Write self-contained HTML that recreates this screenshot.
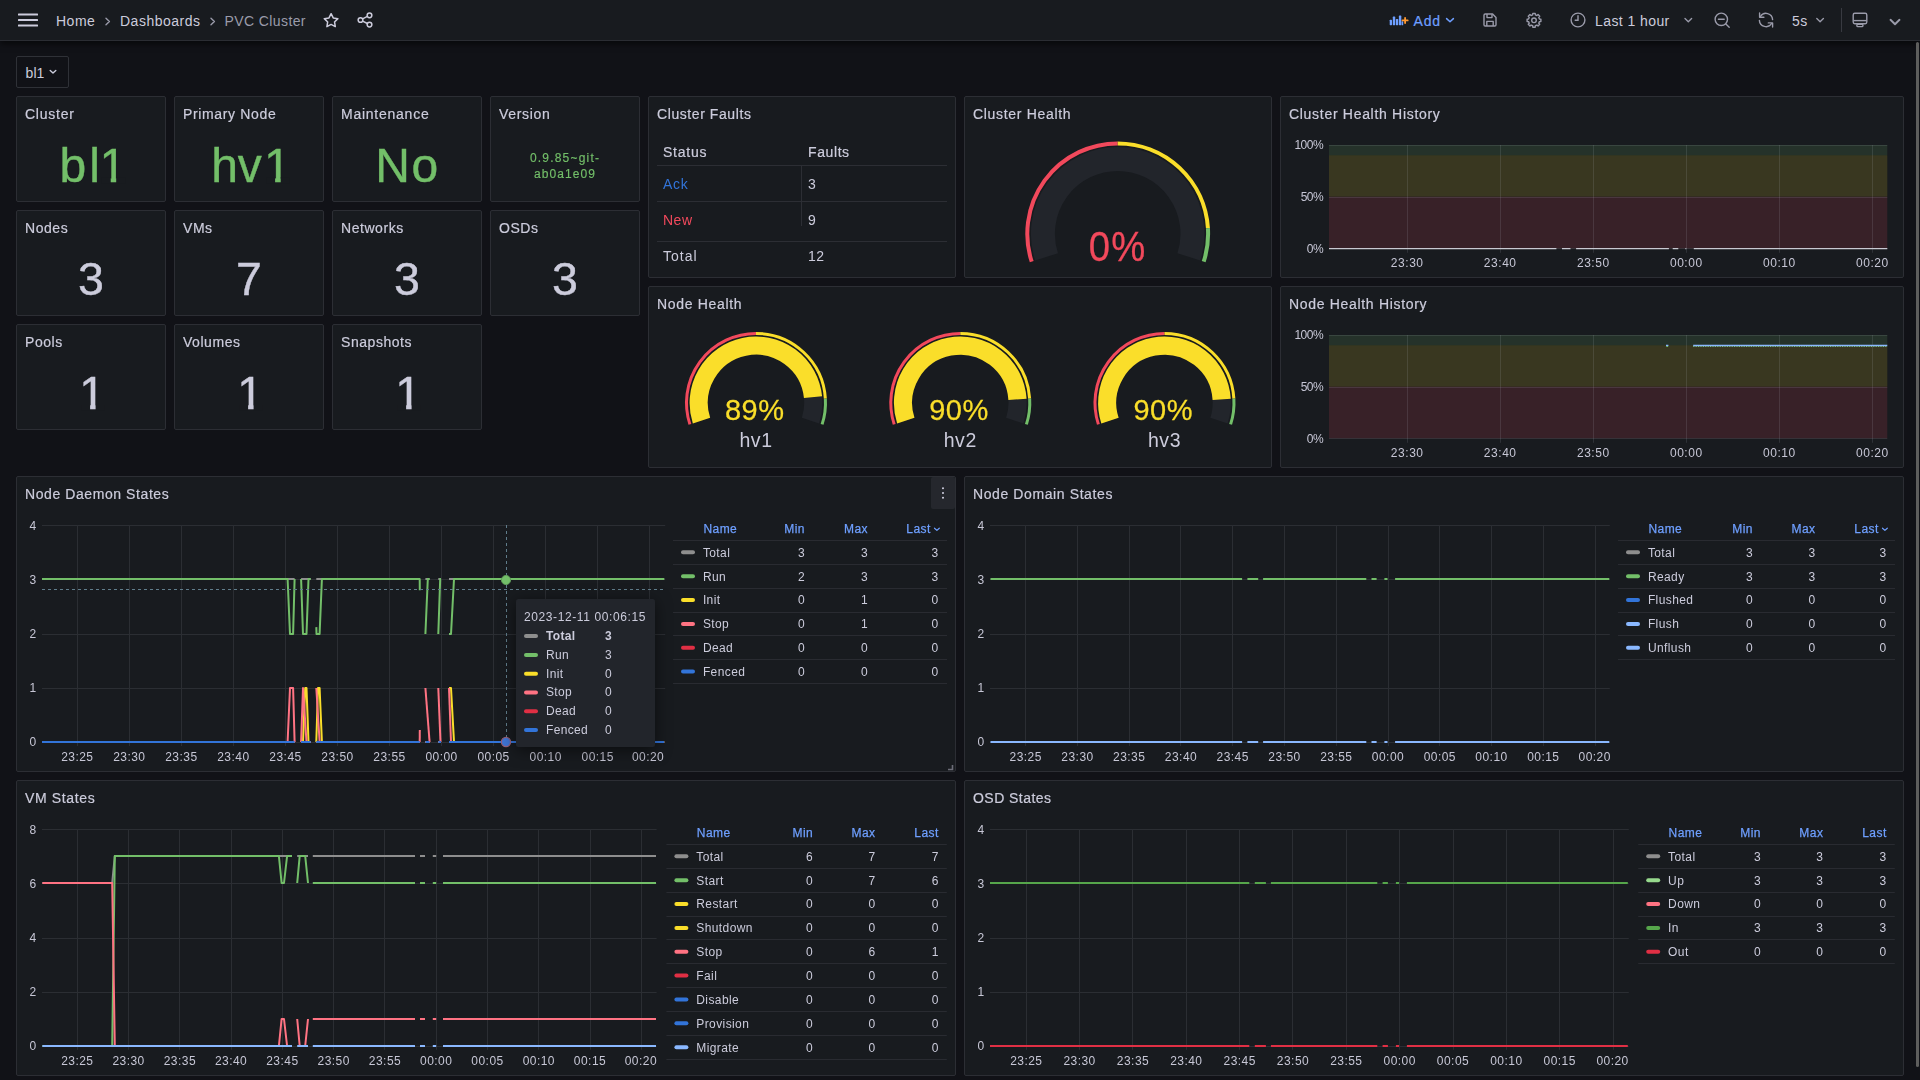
<!DOCTYPE html><html lang="en"><head><meta charset="utf-8"><title>PVC Cluster - Dashboards - Grafana</title><style>

*{box-sizing:border-box;margin:0;padding:0}
html,body{width:1920px;height:1080px;overflow:hidden;background:#111217;color:#ccccdc;
 font-family:"Liberation Sans",sans-serif;font-size:14px;}
body{position:relative}
.abs{position:absolute}
.nav{position:absolute;left:0;top:0;width:1920px;height:41px;background:#181b1f;border-bottom:1px solid #2b2d33;
 box-shadow:0 3px 6px rgba(0,0,0,0.55)}
.nav .t{position:absolute;top:12.7px;font-size:14px;line-height:17px;white-space:nowrap;letter-spacing:.35px}
.panel{position:absolute;background:#181b1f;border:1px solid #2c2e34;border-radius:2px;overflow:hidden}
.ptitle{position:absolute;left:8px;top:8px;font-size:14px;line-height:19px;letter-spacing:.5px;white-space:nowrap;color:#ccccdc;-webkit-text-stroke:.25px #ccccdc}
.big{position:absolute;left:0;right:0;text-align:center;white-space:nowrap}
svg{position:absolute;left:0;top:0;overflow:visible}
svg text{font-family:"Liberation Sans",sans-serif}
.lt{position:absolute;font-size:12px;line-height:19px;white-space:nowrap;letter-spacing:.35px}
.lh{color:#6e9fff;-webkit-text-stroke:.2px #6e9fff}
.lrow{position:absolute;height:1px;background:#2c2e34}
.lic{position:absolute;width:14px;height:4px;border-radius:2px}

</style></head><body>
<div class="nav">
<svg width="1920" height="41" viewBox="0 0 1920 41">
<g fill="#ccccdc"><rect x="18" y="13.6" width="20" height="2" rx=".5"/><rect x="18" y="19.1" width="20" height="2" rx=".5"/><rect x="18" y="24.6" width="20" height="2" rx=".5"/></g>
<g fill="none" stroke="#9a9baa" stroke-width="1.4" stroke-linecap="round" stroke-linejoin="round"><path d="M106 18.3 L109.4 21.5 L106 24.7"/><path d="M211 18.3 L214.4 21.5 L211 24.7"/></g>
<polygon points="331.10,13.70 333.22,17.94 337.90,18.64 334.52,21.96 335.30,26.63 331.10,24.45 326.90,26.63 327.68,21.96 324.30,18.64 328.98,17.94" fill="none" stroke="#ccccdc" stroke-width="1.5" stroke-linejoin="round"/>
<g fill="none" stroke="#ccccdc" stroke-width="1.5"><circle cx="369.5" cy="15.3" r="2.35"/><circle cx="369.5" cy="24.6" r="2.35"/><circle cx="360.5" cy="20" r="2.35"/><path d="M362.6 18.9 L367.4 16.4 M362.6 21.1 L367.4 23.5"/></g>
<g fill="#6e9fff"><rect x="1389.7" y="19.7" width="2.3" height="5.5" rx=".6"/><rect x="1392.8" y="16.6" width="2.4" height="8.6" rx=".6"/><rect x="1395.9" y="19" width="2.3" height="6.2" rx=".6"/><rect x="1398.9" y="15.6" width="2.4" height="9.6" rx=".6"/><rect x="1401.6" y="21.3" width="1.6" height="3.9" rx=".5"/></g>
<path d="M1405.1 17.8 V23 M1402.5 20.4 H1407.7" stroke="#ff9830" stroke-width="1.8" fill="none" stroke-linecap="round"/>
<path d="M1446.6 18.6 L1450 21.8 L1453.4 18.6" fill="none" stroke="#6e9fff" stroke-width="1.5" stroke-linecap="round" stroke-linejoin="round"/>
<g fill="none" stroke="#9a9baa" stroke-width="1.4" stroke-linejoin="round"><path d="M1485.2 14 H1492.6 L1496 17.4 V24.8 Q1496 26 1494.8 26 H1485.2 Q1484 26 1484 24.8 V15.2 Q1484 14 1485.2 14 Z"/><path d="M1487 14 V17.6 H1492 V14.2"/><path d="M1486.8 26 V21.4 H1493.2 V26"/></g>
<polygon points="1532.80,13.40 1535.20,13.40 1535.31,14.85 1536.93,15.53 1538.03,14.57 1539.73,16.27 1538.77,17.37 1539.45,18.99 1540.90,19.10 1540.90,21.50 1539.45,21.61 1538.77,23.23 1539.73,24.33 1538.03,26.03 1536.93,25.07 1535.31,25.75 1535.20,27.20 1532.80,27.20 1532.69,25.75 1531.07,25.07 1529.97,26.03 1528.27,24.33 1529.23,23.23 1528.55,21.61 1527.10,21.50 1527.10,19.10 1528.55,18.99 1529.23,17.37 1528.27,16.27 1529.97,14.57 1531.07,15.53 1532.69,14.85" fill="none" stroke="#9a9baa" stroke-width="1.4" stroke-linejoin="round"/>
<circle cx="1534" cy="20.3" r="2.3" fill="none" stroke="#9a9baa" stroke-width="1.4"/>
<g fill="none" stroke="#9a9baa" stroke-width="1.4" stroke-linecap="round"><circle cx="1578" cy="20" r="6.9"/><path d="M1578 15.8 V20.2 H1575.2"/></g>
<path d="M1685 18.6 L1688.3 21.7 L1691.6 18.6" fill="none" stroke="#9a9baa" stroke-width="1.4" stroke-linecap="round" stroke-linejoin="round"/>
<g fill="none" stroke="#9a9baa" stroke-width="1.4" stroke-linecap="round"><circle cx="1721.3" cy="19.3" r="6.2"/><path d="M1725.9 23.9 L1729.2 27.2 M1718.4 19.3 H1724.2"/></g>
<g fill="none" stroke="#9a9baa" stroke-width="1.4" stroke-linecap="round" stroke-linejoin="round"><path d="M1760.4 16.5 A6.6 6.6 0 0 1 1772.6 19.6"/><path d="M1759.4 20.4 A6.6 6.6 0 0 0 1771.6 23.5"/><path d="M1759.6 12.9 V17.2 H1763.9"/><path d="M1772.6 27.1 V22.9 H1768.3"/></g>
<path d="M1816.8 18.6 L1820.1 21.7 L1823.4 18.6" fill="none" stroke="#9a9baa" stroke-width="1.4" stroke-linecap="round" stroke-linejoin="round"/>
<rect x="1841" y="8" width="1" height="24" fill="#383a41"/>
<g fill="none" stroke="#9a9baa" stroke-width="1.4" stroke-linejoin="round"><rect x="1853.2" y="13.3" width="13.6" height="10.4" rx="1.6"/><path d="M1853.4 20.6 H1866.6"/><rect x="1856.9" y="24.2" width="6" height="2.4" rx=".9"/></g>
<path d="M1890.5 19.8 L1895 24.2 L1899.5 19.8" fill="none" stroke="#9a9baa" stroke-width="1.9" stroke-linecap="round" stroke-linejoin="round"/>
</svg>
<div class="t" style="left:56px;letter-spacing:.5px">Home</div>
<div class="t" style="left:120px;letter-spacing:.5px">Dashboards</div>
<div class="t" style="left:224.5px;color:#9a9baa;letter-spacing:.4px">PVC Cluster</div>
<div class="t" style="left:1413.5px;color:#6e9fff;letter-spacing:.85px;-webkit-text-stroke:.2px #6e9fff">Add</div>
<div class="t" style="left:1595px;letter-spacing:.42px">Last 1 hour</div>
<div class="t" style="left:1792px">5s</div>
</div>
<div class="abs" style="left:16px;top:56px;width:53px;height:32px;border:1px solid #2f3137;border-radius:2px;background:#111217"></div>
<div class="abs" style="left:25.5px;top:64px;font-size:14px;line-height:19px;letter-spacing:.1px">bl1</div>
<svg width="1920" height="100" viewBox="0 0 1920 100" style="pointer-events:none"><path d="M50.2 70.4 L53 73 L55.8 70.4" fill="none" stroke="#ccccdc" stroke-width="1.4" stroke-linecap="round" stroke-linejoin="round"/></svg>
<div class="abs" style="left:1916px;top:42px;width:3px;height:1025px;background:#5e5e5d;border-radius:1.5px"></div>
<div class="panel" style="left:16px;top:96px;width:150px;height:106px"></div>
<div class="panel" style="left:174px;top:96px;width:150px;height:106px"></div>
<div class="panel" style="left:332px;top:96px;width:150px;height:106px"></div>
<div class="panel" style="left:490px;top:96px;width:150px;height:106px"></div>
<div class="panel" style="left:16px;top:210px;width:150px;height:106px"></div>
<div class="panel" style="left:174px;top:210px;width:150px;height:106px"></div>
<div class="panel" style="left:332px;top:210px;width:150px;height:106px"></div>
<div class="panel" style="left:490px;top:210px;width:150px;height:106px"></div>
<div class="panel" style="left:16px;top:324px;width:150px;height:106px"></div>
<div class="panel" style="left:174px;top:324px;width:150px;height:106px"></div>
<div class="panel" style="left:332px;top:324px;width:150px;height:106px"></div>
<div class="panel" style="left:648px;top:96px;width:308px;height:182px"></div>
<div class="panel" style="left:964px;top:96px;width:308px;height:182px"></div>
<div class="panel" style="left:1280px;top:96px;width:624px;height:182px"></div>
<div class="panel" style="left:648px;top:286px;width:624px;height:182px"></div>
<div class="panel" style="left:1280px;top:286px;width:624px;height:182px"></div>
<div class="panel" style="left:16px;top:476px;width:940px;height:296px"></div>
<div class="panel" style="left:964px;top:476px;width:940px;height:296px"></div>
<div class="panel" style="left:16px;top:780px;width:940px;height:296px"></div>
<div class="panel" style="left:964px;top:780px;width:940px;height:296px"></div>
<svg width="1920" height="1080" viewBox="0 0 1920 1080" style="will-change:transform">
<text x="25" y="119" font-size="14" fill="#ccccdc" letter-spacing="0.75" stroke="#ccccdc" stroke-width="0.2">Cluster</text>
<text x="183" y="119" font-size="14" fill="#ccccdc" letter-spacing="0.65" stroke="#ccccdc" stroke-width="0.2">Primary Node</text>
<text x="341" y="119" font-size="14" fill="#ccccdc" letter-spacing="0.75" stroke="#ccccdc" stroke-width="0.2">Maintenance</text>
<text x="499" y="119" font-size="14" fill="#ccccdc" letter-spacing="0.7" stroke="#ccccdc" stroke-width="0.2">Version</text>
<text x="25" y="233" font-size="14" fill="#ccccdc" letter-spacing="0.55" stroke="#ccccdc" stroke-width="0.2">Nodes</text>
<text x="183" y="233" font-size="14" fill="#ccccdc" letter-spacing="0.55" stroke="#ccccdc" stroke-width="0.2">VMs</text>
<text x="341" y="233" font-size="14" fill="#ccccdc" letter-spacing="0.55" stroke="#ccccdc" stroke-width="0.2">Networks</text>
<text x="499" y="233" font-size="14" fill="#ccccdc" letter-spacing="0.55" stroke="#ccccdc" stroke-width="0.2">OSDs</text>
<text x="25" y="347" font-size="14" fill="#ccccdc" letter-spacing="0.55" stroke="#ccccdc" stroke-width="0.2">Pools</text>
<text x="183" y="347" font-size="14" fill="#ccccdc" letter-spacing="0.55" stroke="#ccccdc" stroke-width="0.2">Volumes</text>
<text x="341" y="347" font-size="14" fill="#ccccdc" letter-spacing="0.55" stroke="#ccccdc" stroke-width="0.2">Snapshots</text>
<text x="657" y="119" font-size="14" fill="#ccccdc" letter-spacing="0.58" stroke="#ccccdc" stroke-width="0.2">Cluster Faults</text>
<text x="973" y="119" font-size="14" fill="#ccccdc" letter-spacing="0.68" stroke="#ccccdc" stroke-width="0.2">Cluster Health</text>
<text x="1289" y="119" font-size="14" fill="#ccccdc" letter-spacing="0.7" stroke="#ccccdc" stroke-width="0.2">Cluster Health History</text>
<text x="657" y="309" font-size="14" fill="#ccccdc" letter-spacing="0.68" stroke="#ccccdc" stroke-width="0.2">Node Health</text>
<text x="1289" y="309" font-size="14" fill="#ccccdc" letter-spacing="0.68" stroke="#ccccdc" stroke-width="0.2">Node Health History</text>
<text x="25" y="499" font-size="14" fill="#ccccdc" letter-spacing="0.58" stroke="#ccccdc" stroke-width="0.2">Node Daemon States</text>
<text x="973" y="499" font-size="14" fill="#ccccdc" letter-spacing="0.6" stroke="#ccccdc" stroke-width="0.2">Node Domain States</text>
<text x="25" y="803" font-size="14" fill="#ccccdc" letter-spacing="0.65" stroke="#ccccdc" stroke-width="0.2">VM States</text>
<text x="973" y="803" font-size="14" fill="#ccccdc" letter-spacing="0.45" stroke="#ccccdc" stroke-width="0.2">OSD States</text>
<text y="181.7" font-size="48" fill="#73bf69" stroke="#73bf69" stroke-width="0.4"><tspan x="59.5">b</tspan><tspan x="89.3">l</tspan><tspan x="99.4">1</tspan></text>
<rect x="101.8" y="177.3" width="8.9" height="6.0" fill="#181b1f"/>
<rect x="116.2" y="177.3" width="9.2" height="6.0" fill="#181b1f"/>
<text y="181.7" font-size="48" fill="#73bf69" stroke="#73bf69" stroke-width="0.4"><tspan x="211.2">h</tspan><tspan x="237.8">v</tspan><tspan x="263.9">1</tspan></text>
<rect x="266.2" y="177.3" width="8.9" height="6.0" fill="#181b1f"/>
<rect x="280.7" y="177.3" width="9.2" height="6.0" fill="#181b1f"/>
<text x="407.5" y="181.7" font-size="48" fill="#73bf69" text-anchor="middle" letter-spacing="1.5" stroke="#73bf69" stroke-width="0.4">No</text>
<text x="565" y="162.3" font-size="12" fill="#73bf69" text-anchor="middle" letter-spacing="1.2" stroke="#73bf69" stroke-width="0.15">0.9.85~git-</text>
<text x="565" y="177.8" font-size="12" fill="#73bf69" text-anchor="middle" letter-spacing="1.1" stroke="#73bf69" stroke-width="0.15">ab0a1e09</text>
<text x="91" y="295.4" font-size="46.5" fill="#ccccdc" text-anchor="middle" stroke="#ccccdc" stroke-width="0.4">3</text>
<text x="249" y="295.4" font-size="46.5" fill="#ccccdc" text-anchor="middle" stroke="#ccccdc" stroke-width="0.4">7</text>
<text x="407" y="295.4" font-size="46.5" fill="#ccccdc" text-anchor="middle" stroke="#ccccdc" stroke-width="0.4">3</text>
<text x="565" y="295.4" font-size="46.5" fill="#ccccdc" text-anchor="middle" stroke="#ccccdc" stroke-width="0.4">3</text>
<text x="92.2" y="409.3" font-size="46.5" fill="#ccccdc" text-anchor="middle" stroke="#ccccdc" stroke-width="0.4">1</text>
<rect x="81.5" y="405.0" width="8.6" height="5.8" fill="#181b1f"/>
<rect x="95.6" y="405.0" width="8.9" height="5.8" fill="#181b1f"/>
<text x="250.2" y="409.3" font-size="46.5" fill="#ccccdc" text-anchor="middle" stroke="#ccccdc" stroke-width="0.4">1</text>
<rect x="239.5" y="405.0" width="8.6" height="5.8" fill="#181b1f"/>
<rect x="253.6" y="405.0" width="8.9" height="5.8" fill="#181b1f"/>
<text x="408.2" y="409.3" font-size="46.5" fill="#ccccdc" text-anchor="middle" stroke="#ccccdc" stroke-width="0.4">1</text>
<rect x="397.5" y="405.0" width="8.6" height="5.8" fill="#181b1f"/>
<rect x="411.6" y="405.0" width="8.9" height="5.8" fill="#181b1f"/>
<g fill="#2c2e34"><rect x="657" y="165" width="290" height="1"/><rect x="657" y="201" width="290" height="1"/><rect x="657" y="241" width="290" height="1"/><rect x="801" y="166" width="1" height="60"/></g>
<text x="663" y="156.7" font-size="14" fill="#ccccdc" letter-spacing="0.75" stroke="#ccccdc" stroke-width="0.2">Status</text>
<text x="808" y="156.7" font-size="14" fill="#ccccdc" letter-spacing="0.6" stroke="#ccccdc" stroke-width="0.2">Faults</text>
<text x="663" y="189" font-size="14" fill="#3274d9" letter-spacing="0.7">Ack</text>
<text x="808" y="189" font-size="14" fill="#ccccdc" letter-spacing="0.5">3</text>
<text x="663" y="225" font-size="14" fill="#f2495c" letter-spacing="0.5">New</text>
<text x="808" y="225" font-size="14" fill="#ccccdc" letter-spacing="0.5">9</text>
<text x="663" y="261" font-size="14" fill="#ccccdc" letter-spacing="1.0">Total</text>
<text x="808" y="261" font-size="14" fill="#ccccdc" letter-spacing="0.5">12</text>
<path d="M1031.72 261.74 A90.40 90.40 0 0 1 1117.70 143.40" fill="none" stroke="#f2495c" stroke-width="4.0"/>
<path d="M1117.70 143.40 A90.40 90.40 0 0 1 1207.92 228.12" fill="none" stroke="#fade2a" stroke-width="4.0"/>
<path d="M1207.92 228.12 A90.40 90.40 0 0 1 1203.68 261.74" fill="none" stroke="#73bf69" stroke-width="4.0"/>
<path d="M1046.56 256.91 A74.80 74.80 0 1 1 1188.84 256.91" fill="none" stroke="#22252b" stroke-width="24.0"/>
<text x="0" y="0" font-size="42.5" fill="#f2495c" text-anchor="middle" letter-spacing="1.5" stroke="#f2495c" stroke-width="0.3" transform="translate(1117.7,261.3) scale(0.9,1)">0%</text>
<path d="M689.90 424.38 A69.50 69.50 0 0 1 756.00 333.40" fill="none" stroke="#f2495c" stroke-width="3.0"/>
<path d="M756.00 333.40 A69.50 69.50 0 0 1 825.36 398.54" fill="none" stroke="#fade2a" stroke-width="3.0"/>
<path d="M825.36 398.54 A69.50 69.50 0 0 1 822.10 424.38" fill="none" stroke="#73bf69" stroke-width="3.0"/>
<path d="M701.50 420.61 A57.30 57.30 0 1 1 810.50 420.61" fill="none" stroke="#22252b" stroke-width="18.2"/>
<path d="M701.50 420.61 A57.30 57.30 0 1 1 813.01 397.15" fill="none" stroke="#fade2a" stroke-width="18.2"/>
<text x="0" y="0" font-size="29.5" fill="#fade2a" text-anchor="middle" letter-spacing="0.5" stroke="#fade2a" stroke-width="0.25" transform="translate(754.7,420.4) scale(0.985,1)">89%</text>
<text x="756" y="447.2" font-size="19.5" fill="#ccccdc" text-anchor="middle" letter-spacing="0.6">hv1</text>
<path d="M894.20 424.38 A69.50 69.50 0 0 1 960.30 333.40" fill="none" stroke="#f2495c" stroke-width="3.0"/>
<path d="M960.30 333.40 A69.50 69.50 0 0 1 1029.66 398.54" fill="none" stroke="#fade2a" stroke-width="3.0"/>
<path d="M1029.66 398.54 A69.50 69.50 0 0 1 1026.40 424.38" fill="none" stroke="#73bf69" stroke-width="3.0"/>
<path d="M905.80 420.61 A57.30 57.30 0 1 1 1014.80 420.61" fill="none" stroke="#22252b" stroke-width="18.2"/>
<path d="M905.80 420.61 A57.30 57.30 0 1 1 1017.49 399.30" fill="none" stroke="#fade2a" stroke-width="18.2"/>
<text x="0" y="0" font-size="29.5" fill="#fade2a" text-anchor="middle" letter-spacing="0.5" stroke="#fade2a" stroke-width="0.25" transform="translate(959.0,420.4) scale(0.985,1)">90%</text>
<text x="960.3" y="447.2" font-size="19.5" fill="#ccccdc" text-anchor="middle" letter-spacing="0.6">hv2</text>
<path d="M1098.40 424.38 A69.50 69.50 0 0 1 1164.50 333.40" fill="none" stroke="#f2495c" stroke-width="3.0"/>
<path d="M1164.50 333.40 A69.50 69.50 0 0 1 1233.86 398.54" fill="none" stroke="#fade2a" stroke-width="3.0"/>
<path d="M1233.86 398.54 A69.50 69.50 0 0 1 1230.60 424.38" fill="none" stroke="#73bf69" stroke-width="3.0"/>
<path d="M1110.00 420.61 A57.30 57.30 0 1 1 1219.00 420.61" fill="none" stroke="#22252b" stroke-width="18.2"/>
<path d="M1110.00 420.61 A57.30 57.30 0 1 1 1221.69 399.30" fill="none" stroke="#fade2a" stroke-width="18.2"/>
<text x="0" y="0" font-size="29.5" fill="#fade2a" text-anchor="middle" letter-spacing="0.5" stroke="#fade2a" stroke-width="0.25" transform="translate(1163.2,420.4) scale(0.985,1)">90%</text>
<text x="1164.5" y="447.2" font-size="19.5" fill="#ccccdc" text-anchor="middle" letter-spacing="0.6">hv3</text>
</svg>
<svg width="1920" height="1080" viewBox="0 0 1920 1080" style="will-change:transform">
<rect x="1329" y="196.7" width="558.3" height="51.7" fill="#f2495c" fill-opacity=".15"/>
<rect x="1329" y="155.3" width="558.3" height="41.3" fill="#fade2a" fill-opacity=".15"/>
<rect x="1329" y="145.0" width="558.3" height="10.3" fill="#73bf69" fill-opacity=".15"/>
<path d="M1407.5 145 V252.8 M1500.5 145 V252.8 M1593.5 145 V252.8 M1686.5 145 V252.8 M1779.5 145 V252.8 M1872.5 145 V252.8 M1329 248.5 H1887.3 M1329 197.5 H1887.3 M1329 145.5 H1887.3" stroke="rgba(204,204,220,.13)" stroke-width="1" fill="none"/>
<text x="1323.3" y="252.7" font-size="12" fill="#c7c7d6" text-anchor="end" letter-spacing="-0.45">0%</text>
<text x="1323.3" y="201.1" font-size="12" fill="#c7c7d6" text-anchor="end" letter-spacing="-0.45">50%</text>
<text x="1323.3" y="149.4" font-size="12" fill="#c7c7d6" text-anchor="end" letter-spacing="-0.45">100%</text>
<text x="1407.2" y="266.8" font-size="12" fill="#c7c7d6" text-anchor="middle" letter-spacing="0.55">23:30</text>
<text x="1500.2" y="266.8" font-size="12" fill="#c7c7d6" text-anchor="middle" letter-spacing="0.55">23:40</text>
<text x="1593.3" y="266.8" font-size="12" fill="#c7c7d6" text-anchor="middle" letter-spacing="0.55">23:50</text>
<text x="1686.3" y="266.8" font-size="12" fill="#c7c7d6" text-anchor="middle" letter-spacing="0.55">00:00</text>
<text x="1779.4" y="266.8" font-size="12" fill="#c7c7d6" text-anchor="middle" letter-spacing="0.55">00:10</text>
<text x="1872.4" y="266.8" font-size="12" fill="#c7c7d6" text-anchor="middle" letter-spacing="0.55">00:20</text>
<path d="M1329.0 248.5 H1556.4 M1562.0 248.5 H1570.5 M1576.1 248.5 H1668.9 M1672.7 248.5 H1678.3 M1685.4 248.5 H1686.3 M1693.8 248.5 H1887.3" stroke="#c9c9d2" stroke-width="1.25" fill="none"/>
<rect x="1329" y="386.6" width="558.3" height="51.7" fill="#f2495c" fill-opacity=".15"/>
<rect x="1329" y="345.3" width="558.3" height="41.3" fill="#fade2a" fill-opacity=".15"/>
<rect x="1329" y="335.0" width="558.3" height="10.3" fill="#73bf69" fill-opacity=".15"/>
<path d="M1407.5 335 V442.8 M1500.5 335 V442.8 M1593.5 335 V442.8 M1686.5 335 V442.8 M1779.5 335 V442.8 M1872.5 335 V442.8 M1329 438.5 H1887.3 M1329 387.5 H1887.3 M1329 335.5 H1887.3" stroke="rgba(204,204,220,.13)" stroke-width="1" fill="none"/>
<text x="1323.3" y="442.7" font-size="12" fill="#c7c7d6" text-anchor="end" letter-spacing="-0.45">0%</text>
<text x="1323.3" y="391.0" font-size="12" fill="#c7c7d6" text-anchor="end" letter-spacing="-0.45">50%</text>
<text x="1323.3" y="339.4" font-size="12" fill="#c7c7d6" text-anchor="end" letter-spacing="-0.45">100%</text>
<text x="1407.2" y="456.8" font-size="12" fill="#c7c7d6" text-anchor="middle" letter-spacing="0.55">23:30</text>
<text x="1500.2" y="456.8" font-size="12" fill="#c7c7d6" text-anchor="middle" letter-spacing="0.55">23:40</text>
<text x="1593.3" y="456.8" font-size="12" fill="#c7c7d6" text-anchor="middle" letter-spacing="0.55">23:50</text>
<text x="1686.3" y="456.8" font-size="12" fill="#c7c7d6" text-anchor="middle" letter-spacing="0.55">00:00</text>
<text x="1779.4" y="456.8" font-size="12" fill="#c7c7d6" text-anchor="middle" letter-spacing="0.55">00:10</text>
<text x="1872.4" y="456.8" font-size="12" fill="#c7c7d6" text-anchor="middle" letter-spacing="0.55">00:20</text>
<path d="M1693.2 346.4 H1887.3" stroke="#73bf69" stroke-width="1.4" stroke-dasharray="1.2 1.2" fill="none"/>
<path d="M1693.2 345.4 H1887.3 M1666 345.4 H1668.4" stroke="#8ab8ff" stroke-width="1.5" fill="none"/>
<path d="M1666.4 346.5 H1668" stroke="#73bf69" stroke-width="1.2" fill="none"/>
<path d="M42.0 742.5 H665.2 M42.0 688.5 H665.2 M42.0 634.5 H665.2 M42.0 579.5 H665.2 M42.0 525.5 H665.2 M77.5 525.3 V746.0 M129.5 525.3 V746.0 M181.5 525.3 V746.0 M233.5 525.3 V746.0 M285.5 525.3 V746.0 M337.5 525.3 V746.0 M389.5 525.3 V746.0 M441.5 525.3 V746.0 M493.5 525.3 V746.0 M545.5 525.3 V746.0 M597.5 525.3 V746.0 M649.5 525.3 V746.0" stroke="#2b2e33" stroke-width="1" fill="none"/>
<text x="36.2" y="746.4" font-size="12" fill="#c7c7d6" text-anchor="end">0</text>
<text x="36.2" y="692.2" font-size="12" fill="#c7c7d6" text-anchor="end">1</text>
<text x="36.2" y="638.0" font-size="12" fill="#c7c7d6" text-anchor="end">2</text>
<text x="36.2" y="583.9" font-size="12" fill="#c7c7d6" text-anchor="end">3</text>
<text x="36.2" y="529.7" font-size="12" fill="#c7c7d6" text-anchor="end">4</text>
<text x="77.3" y="760.9" font-size="12" fill="#c7c7d6" text-anchor="middle" letter-spacing="0.45">23:25</text>
<text x="129.3" y="760.9" font-size="12" fill="#c7c7d6" text-anchor="middle" letter-spacing="0.45">23:30</text>
<text x="181.4" y="760.9" font-size="12" fill="#c7c7d6" text-anchor="middle" letter-spacing="0.45">23:35</text>
<text x="233.4" y="760.9" font-size="12" fill="#c7c7d6" text-anchor="middle" letter-spacing="0.45">23:40</text>
<text x="285.5" y="760.9" font-size="12" fill="#c7c7d6" text-anchor="middle" letter-spacing="0.45">23:45</text>
<text x="337.5" y="760.9" font-size="12" fill="#c7c7d6" text-anchor="middle" letter-spacing="0.45">23:50</text>
<text x="389.5" y="760.9" font-size="12" fill="#c7c7d6" text-anchor="middle" letter-spacing="0.45">23:55</text>
<text x="441.6" y="760.9" font-size="12" fill="#c7c7d6" text-anchor="middle" letter-spacing="0.45">00:00</text>
<text x="493.6" y="760.9" font-size="12" fill="#c7c7d6" text-anchor="middle" letter-spacing="0.45">00:05</text>
<text x="545.7" y="760.9" font-size="12" fill="#c7c7d6" text-anchor="middle" letter-spacing="0.45">00:10</text>
<text x="597.7" y="760.9" font-size="12" fill="#c7c7d6" text-anchor="middle" letter-spacing="0.45">00:15</text>
<text x="648.1" y="760.9" font-size="12" fill="#c7c7d6" text-anchor="middle" letter-spacing="0.45">00:20</text>
<path d="M42.0 579 H294.6 M301.1 579 H310.7 M316.3 579 H419.8 M425.4 579 H429.6 M438.3 579 H441.0 M449.0 579 H664.2" stroke="#8e8e8e" stroke-width="2" fill="none"/>
<path d="M42.0 579 L287.6 579 L290.0 634 L293.1 634 L294.6 579" stroke="#73bf69" stroke-width="2" fill="none" stroke-linejoin="round"/>
<path d="M301.1 579 L303.0 634 L306.5 634 L308.5 579 L310.7 579" stroke="#73bf69" stroke-width="2" fill="none" stroke-linejoin="round"/>
<path d="M316.3 627.1 L316.5 634 L319.6 634 L321.9 579 L419.7 579 L419.8 590.3" stroke="#73bf69" stroke-width="2" fill="none" stroke-linejoin="round"/>
<path d="M425.4 634 L427.8 579 L429.6 579" stroke="#73bf69" stroke-width="2" fill="none" stroke-linejoin="round"/>
<path d="M438.3 634 L440.2 579 L441.0 579" stroke="#73bf69" stroke-width="2" fill="none" stroke-linejoin="round"/>
<path d="M449.0 634 L451.0 634 L454.0 579 L664.2 579" stroke="#73bf69" stroke-width="2" fill="none" stroke-linejoin="round"/>
<path d="M42.0 742 H294.6 M301.1 742 H310.7 M316.3 742 H419.8 M425.4 742 H429.6 M438.3 742 H441.0 M449.0 742 H664.2" stroke="#fade2a" stroke-width="2" fill="none"/>
<path d="M303.0 742 L305.2 688 L306.5 688 L308.5 742" stroke="#fade2a" stroke-width="2" fill="none" stroke-linejoin="round"/>
<path d="M316.3 742 L318.0 688 L319.6 688 L321.9 742" stroke="#fade2a" stroke-width="2" fill="none" stroke-linejoin="round"/>
<path d="M449.0 688 L451.0 688 L454.0 742" stroke="#fade2a" stroke-width="2" fill="none" stroke-linejoin="round"/>
<path d="M42.0 742 H294.6 M301.1 742 H310.7 M316.3 742 H419.8 M425.4 742 H429.6 M438.3 742 H441.0 M449.0 742 H664.2" stroke="#ff7383" stroke-width="2" fill="none"/>
<path d="M287.6 742 L290.0 688 L293.1 688 L294.6 742" stroke="#ff7383" stroke-width="2" fill="none" stroke-linejoin="round"/>
<path d="M301.1 742 L303.0 688 L306.5 742" stroke="#ff7383" stroke-width="2" fill="none" stroke-linejoin="round"/>
<path d="M316.3 688 L319.6 742" stroke="#ff7383" stroke-width="2" fill="none" stroke-linejoin="round"/>
<path d="M419.7 742 L419.8 730.1" stroke="#ff7383" stroke-width="2" fill="none" stroke-linejoin="round"/>
<path d="M425.4 688 L429.6 742" stroke="#ff7383" stroke-width="2" fill="none" stroke-linejoin="round"/>
<path d="M438.3 688 L440.5 742" stroke="#ff7383" stroke-width="2" fill="none" stroke-linejoin="round"/>
<path d="M449.0 688 L451.0 742" stroke="#ff7383" stroke-width="2" fill="none" stroke-linejoin="round"/>
<path d="M42.0 742 H294.6 M301.1 742 H310.7 M316.3 742 H419.8 M425.4 742 H429.6 M438.3 742 H441.0 M449.0 742 H664.2" stroke="#3274d9" stroke-width="2" fill="none"/>
<path d="M506.5 525 V746" stroke="#607d8b" stroke-width="1" stroke-dasharray="3 3" fill="none"/>
<path d="M42 589.5 H665" stroke="#607d8b" stroke-width="1" stroke-dasharray="3 3" fill="none"/>
<circle cx="506" cy="580" r="4.6" fill="#73bf69" stroke="#5f9a58" stroke-width="1"/>
<circle cx="506" cy="742" r="4.6" fill="#3f74d4" stroke="#96607a" stroke-width="1.2"/>
<path d="M673 540.5 H947 M673 564.5 H947 M673 588.5 H947 M673 612.5 H947 M673 635.5 H947 M673 659.5 H947 M673 683.5 H947" stroke="#292b31" stroke-width="1" fill="none"/>
<text x="703.4" y="532.8" font-size="12" fill="#6e9fff" letter-spacing="0.45" stroke="#6e9fff" stroke-width="0.25">Name</text>
<text x="805" y="532.8" font-size="12" fill="#6e9fff" text-anchor="end" letter-spacing="0.45" stroke="#6e9fff" stroke-width="0.25">Min</text>
<text x="868" y="532.8" font-size="12" fill="#6e9fff" text-anchor="end" letter-spacing="0.45" stroke="#6e9fff" stroke-width="0.25">Max</text>
<text x="930.8" y="532.8" font-size="12" fill="#6e9fff" text-anchor="end" letter-spacing="0.45" stroke="#6e9fff" stroke-width="0.25">Last</text>
<path d="M934.5 528.2 L936.9 530.4 L939.3 528.2" stroke="#6e9fff" stroke-width="1.2" fill="none" stroke-linecap="round" stroke-linejoin="round"/>
<rect x="681" y="550.3" width="14" height="4" rx="2" fill="#8e8e8e"/>
<text x="702.9" y="556.6" font-size="12" fill="#ccccdc" letter-spacing="0.4">Total</text>
<text x="804.6" y="556.6" font-size="12" fill="#ccccdc" text-anchor="end">3</text>
<text x="867.6" y="556.6" font-size="12" fill="#ccccdc" text-anchor="end">3</text>
<text x="938.1" y="556.6" font-size="12" fill="#ccccdc" text-anchor="end">3</text>
<rect x="681" y="574.2" width="14" height="4" rx="2" fill="#73bf69"/>
<text x="702.9" y="580.5" font-size="12" fill="#ccccdc" letter-spacing="0.4">Run</text>
<text x="804.6" y="580.5" font-size="12" fill="#ccccdc" text-anchor="end">2</text>
<text x="867.6" y="580.5" font-size="12" fill="#ccccdc" text-anchor="end">3</text>
<text x="938.1" y="580.5" font-size="12" fill="#ccccdc" text-anchor="end">3</text>
<rect x="681" y="598.0" width="14" height="4" rx="2" fill="#fade2a"/>
<text x="702.9" y="604.3" font-size="12" fill="#ccccdc" letter-spacing="0.4">Init</text>
<text x="804.6" y="604.3" font-size="12" fill="#ccccdc" text-anchor="end">0</text>
<text x="867.6" y="604.3" font-size="12" fill="#ccccdc" text-anchor="end">1</text>
<text x="938.1" y="604.3" font-size="12" fill="#ccccdc" text-anchor="end">0</text>
<rect x="681" y="621.9" width="14" height="4" rx="2" fill="#ff7383"/>
<text x="702.9" y="628.2" font-size="12" fill="#ccccdc" letter-spacing="0.4">Stop</text>
<text x="804.6" y="628.2" font-size="12" fill="#ccccdc" text-anchor="end">0</text>
<text x="867.6" y="628.2" font-size="12" fill="#ccccdc" text-anchor="end">1</text>
<text x="938.1" y="628.2" font-size="12" fill="#ccccdc" text-anchor="end">0</text>
<rect x="681" y="645.7" width="14" height="4" rx="2" fill="#e02f44"/>
<text x="702.9" y="652.0" font-size="12" fill="#ccccdc" letter-spacing="0.4">Dead</text>
<text x="804.6" y="652.0" font-size="12" fill="#ccccdc" text-anchor="end">0</text>
<text x="867.6" y="652.0" font-size="12" fill="#ccccdc" text-anchor="end">0</text>
<text x="938.1" y="652.0" font-size="12" fill="#ccccdc" text-anchor="end">0</text>
<rect x="681" y="669.6" width="14" height="4" rx="2" fill="#3274d9"/>
<text x="702.9" y="675.9" font-size="12" fill="#ccccdc" letter-spacing="0.4">Fenced</text>
<text x="804.6" y="675.9" font-size="12" fill="#ccccdc" text-anchor="end">0</text>
<text x="867.6" y="675.9" font-size="12" fill="#ccccdc" text-anchor="end">0</text>
<text x="938.1" y="675.9" font-size="12" fill="#ccccdc" text-anchor="end">0</text>
<rect x="931" y="477" width="24" height="32" rx="2" fill="#25272d"/>
<g fill="#ccccdc"><circle cx="943" cy="488.3" r="1.05"/><circle cx="943" cy="493" r="1.05"/><circle cx="943" cy="497.7" r="1.05"/></g>
<path d="M948 769.5 H952.5 V765" stroke="#6c6d78" stroke-width="1.6" fill="none"/>
<path d="M990.0 742.5 H1609.8 M990.0 688.5 H1609.8 M990.0 634.5 H1609.8 M990.0 579.5 H1609.8 M990.0 525.5 H1609.8 M1025.5 525.3 V746.0 M1077.5 525.3 V746.0 M1129.5 525.3 V746.0 M1180.5 525.3 V746.0 M1232.5 525.3 V746.0 M1284.5 525.3 V746.0 M1336.5 525.3 V746.0 M1388.5 525.3 V746.0 M1439.5 525.3 V746.0 M1491.5 525.3 V746.0 M1543.5 525.3 V746.0 M1595.5 525.3 V746.0" stroke="#2b2e33" stroke-width="1" fill="none"/>
<text x="984.2" y="746.4" font-size="12" fill="#c7c7d6" text-anchor="end">0</text>
<text x="984.2" y="692.2" font-size="12" fill="#c7c7d6" text-anchor="end">1</text>
<text x="984.2" y="638.0" font-size="12" fill="#c7c7d6" text-anchor="end">2</text>
<text x="984.2" y="583.9" font-size="12" fill="#c7c7d6" text-anchor="end">3</text>
<text x="984.2" y="529.7" font-size="12" fill="#c7c7d6" text-anchor="end">4</text>
<text x="1025.7" y="760.9" font-size="12" fill="#c7c7d6" text-anchor="middle" letter-spacing="0.45">23:25</text>
<text x="1077.5" y="760.9" font-size="12" fill="#c7c7d6" text-anchor="middle" letter-spacing="0.45">23:30</text>
<text x="1129.2" y="760.9" font-size="12" fill="#c7c7d6" text-anchor="middle" letter-spacing="0.45">23:35</text>
<text x="1181.0" y="760.9" font-size="12" fill="#c7c7d6" text-anchor="middle" letter-spacing="0.45">23:40</text>
<text x="1232.7" y="760.9" font-size="12" fill="#c7c7d6" text-anchor="middle" letter-spacing="0.45">23:45</text>
<text x="1284.5" y="760.9" font-size="12" fill="#c7c7d6" text-anchor="middle" letter-spacing="0.45">23:50</text>
<text x="1336.3" y="760.9" font-size="12" fill="#c7c7d6" text-anchor="middle" letter-spacing="0.45">23:55</text>
<text x="1388.0" y="760.9" font-size="12" fill="#c7c7d6" text-anchor="middle" letter-spacing="0.45">00:00</text>
<text x="1439.8" y="760.9" font-size="12" fill="#c7c7d6" text-anchor="middle" letter-spacing="0.45">00:05</text>
<text x="1491.5" y="760.9" font-size="12" fill="#c7c7d6" text-anchor="middle" letter-spacing="0.45">00:10</text>
<text x="1543.3" y="760.9" font-size="12" fill="#c7c7d6" text-anchor="middle" letter-spacing="0.45">00:15</text>
<text x="1594.7" y="760.9" font-size="12" fill="#c7c7d6" text-anchor="middle" letter-spacing="0.45">00:20</text>
<path d="M990.5 579 H1242.1 M1247.4 579 H1258.2 M1263.1 579 H1366.3 M1371.5 579 H1376.6 M1384.4 579 H1387.5 M1395.1 579 H1609.3" stroke="#73bf69" stroke-width="2" fill="none"/>
<path d="M990.5 742 H1242.1 M1247.4 742 H1258.2 M1263.1 742 H1366.3 M1371.5 742 H1376.6 M1384.4 742 H1387.5 M1395.1 742 H1609.3" stroke="#8ab8ff" stroke-width="2" fill="none"/>
<path d="M1618 540.5 H1895 M1618 564.5 H1895 M1618 588.5 H1895 M1618 612.5 H1895 M1618 635.5 H1895 M1618 659.5 H1895" stroke="#292b31" stroke-width="1" fill="none"/>
<text x="1648.4" y="532.8" font-size="12" fill="#6e9fff" letter-spacing="0.45" stroke="#6e9fff" stroke-width="0.25">Name</text>
<text x="1753" y="532.8" font-size="12" fill="#6e9fff" text-anchor="end" letter-spacing="0.45" stroke="#6e9fff" stroke-width="0.25">Min</text>
<text x="1815.5" y="532.8" font-size="12" fill="#6e9fff" text-anchor="end" letter-spacing="0.45" stroke="#6e9fff" stroke-width="0.25">Max</text>
<text x="1878.8" y="532.8" font-size="12" fill="#6e9fff" text-anchor="end" letter-spacing="0.45" stroke="#6e9fff" stroke-width="0.25">Last</text>
<path d="M1882.5 528.2 L1884.9 530.4 L1887.3 528.2" stroke="#6e9fff" stroke-width="1.2" fill="none" stroke-linecap="round" stroke-linejoin="round"/>
<rect x="1626" y="550.3" width="14" height="4" rx="2" fill="#8e8e8e"/>
<text x="1647.9" y="556.6" font-size="12" fill="#ccccdc" letter-spacing="0.4">Total</text>
<text x="1752.6" y="556.6" font-size="12" fill="#ccccdc" text-anchor="end">3</text>
<text x="1815.1" y="556.6" font-size="12" fill="#ccccdc" text-anchor="end">3</text>
<text x="1886.1" y="556.6" font-size="12" fill="#ccccdc" text-anchor="end">3</text>
<rect x="1626" y="574.2" width="14" height="4" rx="2" fill="#73bf69"/>
<text x="1647.9" y="580.5" font-size="12" fill="#ccccdc" letter-spacing="0.4">Ready</text>
<text x="1752.6" y="580.5" font-size="12" fill="#ccccdc" text-anchor="end">3</text>
<text x="1815.1" y="580.5" font-size="12" fill="#ccccdc" text-anchor="end">3</text>
<text x="1886.1" y="580.5" font-size="12" fill="#ccccdc" text-anchor="end">3</text>
<rect x="1626" y="598.0" width="14" height="4" rx="2" fill="#3274d9"/>
<text x="1647.9" y="604.3" font-size="12" fill="#ccccdc" letter-spacing="0.4">Flushed</text>
<text x="1752.6" y="604.3" font-size="12" fill="#ccccdc" text-anchor="end">0</text>
<text x="1815.1" y="604.3" font-size="12" fill="#ccccdc" text-anchor="end">0</text>
<text x="1886.1" y="604.3" font-size="12" fill="#ccccdc" text-anchor="end">0</text>
<rect x="1626" y="621.9" width="14" height="4" rx="2" fill="#8ab8ff"/>
<text x="1647.9" y="628.2" font-size="12" fill="#ccccdc" letter-spacing="0.4">Flush</text>
<text x="1752.6" y="628.2" font-size="12" fill="#ccccdc" text-anchor="end">0</text>
<text x="1815.1" y="628.2" font-size="12" fill="#ccccdc" text-anchor="end">0</text>
<text x="1886.1" y="628.2" font-size="12" fill="#ccccdc" text-anchor="end">0</text>
<rect x="1626" y="645.7" width="14" height="4" rx="2" fill="#8ab8ff"/>
<text x="1647.9" y="652.0" font-size="12" fill="#ccccdc" letter-spacing="0.4">Unflush</text>
<text x="1752.6" y="652.0" font-size="12" fill="#ccccdc" text-anchor="end">0</text>
<text x="1815.1" y="652.0" font-size="12" fill="#ccccdc" text-anchor="end">0</text>
<text x="1886.1" y="652.0" font-size="12" fill="#ccccdc" text-anchor="end">0</text>
<path d="M42.0 1046.5 H656.6 M42.0 992.5 H656.6 M42.0 938.5 H656.6 M42.0 883.5 H656.6 M42.0 829.5 H656.6 M77.5 829.2 V1049.8 M128.5 829.2 V1049.8 M179.5 829.2 V1049.8 M231.5 829.2 V1049.8 M282.5 829.2 V1049.8 M333.5 829.2 V1049.8 M384.5 829.2 V1049.8 M436.5 829.2 V1049.8 M487.5 829.2 V1049.8 M538.5 829.2 V1049.8 M590.5 829.2 V1049.8 M641.5 829.2 V1049.8" stroke="#2b2e33" stroke-width="1" fill="none"/>
<text x="36.2" y="1050.2" font-size="12" fill="#c7c7d6" text-anchor="end">0</text>
<text x="36.2" y="996.0" font-size="12" fill="#c7c7d6" text-anchor="end">2</text>
<text x="36.2" y="941.9" font-size="12" fill="#c7c7d6" text-anchor="end">4</text>
<text x="36.2" y="887.8" font-size="12" fill="#c7c7d6" text-anchor="end">6</text>
<text x="36.2" y="833.6" font-size="12" fill="#c7c7d6" text-anchor="end">8</text>
<text x="77.3" y="1064.7" font-size="12" fill="#c7c7d6" text-anchor="middle" letter-spacing="0.45">23:25</text>
<text x="128.6" y="1064.7" font-size="12" fill="#c7c7d6" text-anchor="middle" letter-spacing="0.45">23:30</text>
<text x="179.9" y="1064.7" font-size="12" fill="#c7c7d6" text-anchor="middle" letter-spacing="0.45">23:35</text>
<text x="231.1" y="1064.7" font-size="12" fill="#c7c7d6" text-anchor="middle" letter-spacing="0.45">23:40</text>
<text x="282.4" y="1064.7" font-size="12" fill="#c7c7d6" text-anchor="middle" letter-spacing="0.45">23:45</text>
<text x="333.7" y="1064.7" font-size="12" fill="#c7c7d6" text-anchor="middle" letter-spacing="0.45">23:50</text>
<text x="385.0" y="1064.7" font-size="12" fill="#c7c7d6" text-anchor="middle" letter-spacing="0.45">23:55</text>
<text x="436.2" y="1064.7" font-size="12" fill="#c7c7d6" text-anchor="middle" letter-spacing="0.45">00:00</text>
<text x="487.5" y="1064.7" font-size="12" fill="#c7c7d6" text-anchor="middle" letter-spacing="0.45">00:05</text>
<text x="538.8" y="1064.7" font-size="12" fill="#c7c7d6" text-anchor="middle" letter-spacing="0.45">00:10</text>
<text x="590.0" y="1064.7" font-size="12" fill="#c7c7d6" text-anchor="middle" letter-spacing="0.45">00:15</text>
<text x="640.9" y="1064.7" font-size="12" fill="#c7c7d6" text-anchor="middle" letter-spacing="0.45">00:20</text>
<path d="M42.4 883 L112.2 883 L114.8 856 L292.0 856" stroke="#8e8e8e" stroke-width="2" fill="none" stroke-linejoin="round"/>
<path d="M297.2 856 H308.0 M312.8 856 H415.0 M420.0 856 H425.0 M432.8 856 H436.2 M443.0 856 H656.0" stroke="#8e8e8e" stroke-width="2" fill="none"/>
<path d="M42.4 1046 L112.2 1046 L114.8 856 L278.9 856 L281.6 883 L284.0 883 L287.1 856 L292.0 856" stroke="#73bf69" stroke-width="2" fill="none" stroke-linejoin="round"/>
<path d="M297.2 883 L299.7 856 L305.2 856 L308.0 883" stroke="#73bf69" stroke-width="2" fill="none" stroke-linejoin="round"/>
<path d="M312.8 883 H415.0 M420.0 883 H425.0 M432.8 883 H436.2 M443.0 883 H656.0" stroke="#73bf69" stroke-width="2" fill="none"/>
<path d="M42.4 883 L112.2 883 L114.8 1046 L278.9 1046 L281.6 1019 L284.0 1019 L287.1 1046 L292.0 1046" stroke="#ff7383" stroke-width="2" fill="none" stroke-linejoin="round"/>
<path d="M297.2 1019 L299.7 1046 L305.2 1046 L308.0 1019" stroke="#ff7383" stroke-width="2" fill="none" stroke-linejoin="round"/>
<path d="M312.8 1019 H415.0 M420.0 1019 H425.0 M432.8 1019 H436.2 M443.0 1019 H656.0" stroke="#ff7383" stroke-width="2" fill="none"/>
<path d="M42.4 1046 H292.0 M297.2 1046 H308.0 M312.8 1046 H415.0 M420.0 1046 H425.0 M432.8 1046 H436.2 M443.0 1046 H656.0" stroke="#8ab8ff" stroke-width="2" fill="none"/>
<path d="M666.4 844.5 H946.8 M666.4 868.5 H946.8 M666.4 892.5 H946.8 M666.4 916.5 H946.8 M666.4 939.5 H946.8 M666.4 963.5 H946.8 M666.4 987.5 H946.8 M666.4 1011.5 H946.8 M666.4 1035.5 H946.8 M666.4 1059.5 H946.8" stroke="#292b31" stroke-width="1" fill="none"/>
<text x="696.8" y="836.8" font-size="12" fill="#6e9fff" letter-spacing="0.45" stroke="#6e9fff" stroke-width="0.25">Name</text>
<text x="813.2" y="836.8" font-size="12" fill="#6e9fff" text-anchor="end" letter-spacing="0.45" stroke="#6e9fff" stroke-width="0.25">Min</text>
<text x="875.5" y="836.8" font-size="12" fill="#6e9fff" text-anchor="end" letter-spacing="0.45" stroke="#6e9fff" stroke-width="0.25">Max</text>
<text x="938.8" y="836.8" font-size="12" fill="#6e9fff" text-anchor="end" letter-spacing="0.45" stroke="#6e9fff" stroke-width="0.25">Last</text>
<rect x="674.4" y="854.3" width="14" height="4" rx="2" fill="#8e8e8e"/>
<text x="696.3" y="860.6" font-size="12" fill="#ccccdc" letter-spacing="0.4">Total</text>
<text x="812.8000000000001" y="860.6" font-size="12" fill="#ccccdc" text-anchor="end">6</text>
<text x="875.1" y="860.6" font-size="12" fill="#ccccdc" text-anchor="end">7</text>
<text x="938.4" y="860.6" font-size="12" fill="#ccccdc" text-anchor="end">7</text>
<rect x="674.4" y="878.2" width="14" height="4" rx="2" fill="#73bf69"/>
<text x="696.3" y="884.5" font-size="12" fill="#ccccdc" letter-spacing="0.4">Start</text>
<text x="812.8000000000001" y="884.5" font-size="12" fill="#ccccdc" text-anchor="end">0</text>
<text x="875.1" y="884.5" font-size="12" fill="#ccccdc" text-anchor="end">7</text>
<text x="938.4" y="884.5" font-size="12" fill="#ccccdc" text-anchor="end">6</text>
<rect x="674.4" y="902.0" width="14" height="4" rx="2" fill="#fade2a"/>
<text x="696.3" y="908.3" font-size="12" fill="#ccccdc" letter-spacing="0.4">Restart</text>
<text x="812.8000000000001" y="908.3" font-size="12" fill="#ccccdc" text-anchor="end">0</text>
<text x="875.1" y="908.3" font-size="12" fill="#ccccdc" text-anchor="end">0</text>
<text x="938.4" y="908.3" font-size="12" fill="#ccccdc" text-anchor="end">0</text>
<rect x="674.4" y="925.9" width="14" height="4" rx="2" fill="#fade2a"/>
<text x="696.3" y="932.2" font-size="12" fill="#ccccdc" letter-spacing="0.4">Shutdown</text>
<text x="812.8000000000001" y="932.2" font-size="12" fill="#ccccdc" text-anchor="end">0</text>
<text x="875.1" y="932.2" font-size="12" fill="#ccccdc" text-anchor="end">0</text>
<text x="938.4" y="932.2" font-size="12" fill="#ccccdc" text-anchor="end">0</text>
<rect x="674.4" y="949.7" width="14" height="4" rx="2" fill="#ff7383"/>
<text x="696.3" y="956.0" font-size="12" fill="#ccccdc" letter-spacing="0.4">Stop</text>
<text x="812.8000000000001" y="956.0" font-size="12" fill="#ccccdc" text-anchor="end">0</text>
<text x="875.1" y="956.0" font-size="12" fill="#ccccdc" text-anchor="end">6</text>
<text x="938.4" y="956.0" font-size="12" fill="#ccccdc" text-anchor="end">1</text>
<rect x="674.4" y="973.6" width="14" height="4" rx="2" fill="#e02f44"/>
<text x="696.3" y="979.9" font-size="12" fill="#ccccdc" letter-spacing="0.4">Fail</text>
<text x="812.8000000000001" y="979.9" font-size="12" fill="#ccccdc" text-anchor="end">0</text>
<text x="875.1" y="979.9" font-size="12" fill="#ccccdc" text-anchor="end">0</text>
<text x="938.4" y="979.9" font-size="12" fill="#ccccdc" text-anchor="end">0</text>
<rect x="674.4" y="997.4" width="14" height="4" rx="2" fill="#3274d9"/>
<text x="696.3" y="1003.7" font-size="12" fill="#ccccdc" letter-spacing="0.4">Disable</text>
<text x="812.8000000000001" y="1003.7" font-size="12" fill="#ccccdc" text-anchor="end">0</text>
<text x="875.1" y="1003.7" font-size="12" fill="#ccccdc" text-anchor="end">0</text>
<text x="938.4" y="1003.7" font-size="12" fill="#ccccdc" text-anchor="end">0</text>
<rect x="674.4" y="1021.3" width="14" height="4" rx="2" fill="#3274d9"/>
<text x="696.3" y="1027.6" font-size="12" fill="#ccccdc" letter-spacing="0.4">Provision</text>
<text x="812.8000000000001" y="1027.6" font-size="12" fill="#ccccdc" text-anchor="end">0</text>
<text x="875.1" y="1027.6" font-size="12" fill="#ccccdc" text-anchor="end">0</text>
<text x="938.4" y="1027.6" font-size="12" fill="#ccccdc" text-anchor="end">0</text>
<rect x="674.4" y="1045.2" width="14" height="4" rx="2" fill="#8ab8ff"/>
<text x="696.3" y="1051.5" font-size="12" fill="#ccccdc" letter-spacing="0.4">Migrate</text>
<text x="812.8000000000001" y="1051.5" font-size="12" fill="#ccccdc" text-anchor="end">0</text>
<text x="875.1" y="1051.5" font-size="12" fill="#ccccdc" text-anchor="end">0</text>
<text x="938.4" y="1051.5" font-size="12" fill="#ccccdc" text-anchor="end">0</text>
<path d="M990.0 1046.5 H1628.8 M990.0 992.5 H1628.8 M990.0 938.5 H1628.8 M990.0 883.5 H1628.8 M990.0 829.5 H1628.8 M1026.5 829.2 V1049.8 M1079.5 829.2 V1049.8 M1132.5 829.2 V1049.8 M1186.5 829.2 V1049.8 M1239.5 829.2 V1049.8 M1292.5 829.2 V1049.8 M1346.5 829.2 V1049.8 M1399.5 829.2 V1049.8 M1453.5 829.2 V1049.8 M1506.5 829.2 V1049.8 M1559.5 829.2 V1049.8 M1613.5 829.2 V1049.8" stroke="#2b2e33" stroke-width="1" fill="none"/>
<text x="984.2" y="1050.2" font-size="12" fill="#c7c7d6" text-anchor="end">0</text>
<text x="984.2" y="996.0" font-size="12" fill="#c7c7d6" text-anchor="end">1</text>
<text x="984.2" y="941.9" font-size="12" fill="#c7c7d6" text-anchor="end">2</text>
<text x="984.2" y="887.8" font-size="12" fill="#c7c7d6" text-anchor="end">3</text>
<text x="984.2" y="833.6" font-size="12" fill="#c7c7d6" text-anchor="end">4</text>
<text x="1026.3" y="1064.7" font-size="12" fill="#c7c7d6" text-anchor="middle" letter-spacing="0.45">23:25</text>
<text x="1079.6" y="1064.7" font-size="12" fill="#c7c7d6" text-anchor="middle" letter-spacing="0.45">23:30</text>
<text x="1133.0" y="1064.7" font-size="12" fill="#c7c7d6" text-anchor="middle" letter-spacing="0.45">23:35</text>
<text x="1186.3" y="1064.7" font-size="12" fill="#c7c7d6" text-anchor="middle" letter-spacing="0.45">23:40</text>
<text x="1239.7" y="1064.7" font-size="12" fill="#c7c7d6" text-anchor="middle" letter-spacing="0.45">23:45</text>
<text x="1293.0" y="1064.7" font-size="12" fill="#c7c7d6" text-anchor="middle" letter-spacing="0.45">23:50</text>
<text x="1346.3" y="1064.7" font-size="12" fill="#c7c7d6" text-anchor="middle" letter-spacing="0.45">23:55</text>
<text x="1399.7" y="1064.7" font-size="12" fill="#c7c7d6" text-anchor="middle" letter-spacing="0.45">00:00</text>
<text x="1453.0" y="1064.7" font-size="12" fill="#c7c7d6" text-anchor="middle" letter-spacing="0.45">00:05</text>
<text x="1506.4" y="1064.7" font-size="12" fill="#c7c7d6" text-anchor="middle" letter-spacing="0.45">00:10</text>
<text x="1559.7" y="1064.7" font-size="12" fill="#c7c7d6" text-anchor="middle" letter-spacing="0.45">00:15</text>
<text x="1612.6" y="1064.7" font-size="12" fill="#c7c7d6" text-anchor="middle" letter-spacing="0.45">00:20</text>
<path d="M990.0 883 H1249.3 M1254.8 883 H1265.9 M1270.9 883 H1377.3 M1382.6 883 H1387.9 M1395.9 883 H1399.1 M1406.9 883 H1627.8" stroke="#56a64b" stroke-width="2" fill="none"/>
<path d="M990.0 1046 H1249.3 M1254.8 1046 H1265.9 M1270.9 1046 H1377.3 M1382.6 1046 H1387.9 M1395.9 1046 H1399.1 M1406.9 1046 H1627.8" stroke="#e02f44" stroke-width="2" fill="none"/>
<path d="M1638.2 844.5 H1894.8 M1638.2 868.5 H1894.8 M1638.2 892.5 H1894.8 M1638.2 916.5 H1894.8 M1638.2 939.5 H1894.8 M1638.2 963.5 H1894.8" stroke="#292b31" stroke-width="1" fill="none"/>
<text x="1668.6000000000001" y="836.8" font-size="12" fill="#6e9fff" letter-spacing="0.45" stroke="#6e9fff" stroke-width="0.25">Name</text>
<text x="1761" y="836.8" font-size="12" fill="#6e9fff" text-anchor="end" letter-spacing="0.45" stroke="#6e9fff" stroke-width="0.25">Min</text>
<text x="1823.4" y="836.8" font-size="12" fill="#6e9fff" text-anchor="end" letter-spacing="0.45" stroke="#6e9fff" stroke-width="0.25">Max</text>
<text x="1886.7" y="836.8" font-size="12" fill="#6e9fff" text-anchor="end" letter-spacing="0.45" stroke="#6e9fff" stroke-width="0.25">Last</text>
<rect x="1646.2" y="854.3" width="14" height="4" rx="2" fill="#8e8e8e"/>
<text x="1668.1000000000001" y="860.6" font-size="12" fill="#ccccdc" letter-spacing="0.4">Total</text>
<text x="1760.6" y="860.6" font-size="12" fill="#ccccdc" text-anchor="end">3</text>
<text x="1823.0" y="860.6" font-size="12" fill="#ccccdc" text-anchor="end">3</text>
<text x="1886.3" y="860.6" font-size="12" fill="#ccccdc" text-anchor="end">3</text>
<rect x="1646.2" y="878.2" width="14" height="4" rx="2" fill="#96d98d"/>
<text x="1668.1000000000001" y="884.5" font-size="12" fill="#ccccdc" letter-spacing="0.4">Up</text>
<text x="1760.6" y="884.5" font-size="12" fill="#ccccdc" text-anchor="end">3</text>
<text x="1823.0" y="884.5" font-size="12" fill="#ccccdc" text-anchor="end">3</text>
<text x="1886.3" y="884.5" font-size="12" fill="#ccccdc" text-anchor="end">3</text>
<rect x="1646.2" y="902.0" width="14" height="4" rx="2" fill="#ff7383"/>
<text x="1668.1000000000001" y="908.3" font-size="12" fill="#ccccdc" letter-spacing="0.4">Down</text>
<text x="1760.6" y="908.3" font-size="12" fill="#ccccdc" text-anchor="end">0</text>
<text x="1823.0" y="908.3" font-size="12" fill="#ccccdc" text-anchor="end">0</text>
<text x="1886.3" y="908.3" font-size="12" fill="#ccccdc" text-anchor="end">0</text>
<rect x="1646.2" y="925.9" width="14" height="4" rx="2" fill="#56a64b"/>
<text x="1668.1000000000001" y="932.2" font-size="12" fill="#ccccdc" letter-spacing="0.4">In</text>
<text x="1760.6" y="932.2" font-size="12" fill="#ccccdc" text-anchor="end">3</text>
<text x="1823.0" y="932.2" font-size="12" fill="#ccccdc" text-anchor="end">3</text>
<text x="1886.3" y="932.2" font-size="12" fill="#ccccdc" text-anchor="end">3</text>
<rect x="1646.2" y="949.7" width="14" height="4" rx="2" fill="#e02f44"/>
<text x="1668.1000000000001" y="956.0" font-size="12" fill="#ccccdc" letter-spacing="0.4">Out</text>
<text x="1760.6" y="956.0" font-size="12" fill="#ccccdc" text-anchor="end">0</text>
<text x="1823.0" y="956.0" font-size="12" fill="#ccccdc" text-anchor="end">0</text>
<text x="1886.3" y="956.0" font-size="12" fill="#ccccdc" text-anchor="end">0</text>
<rect x="516" y="599" width="139" height="148" rx="2.5" fill="#22252b" style="filter:drop-shadow(0 3px 8px rgba(0,0,0,.55))"/>
<text x="524" y="620.7" font-size="12" fill="#ccccdc" letter-spacing="0.6">2023-12-11 00:06:15</text>
<rect x="524" y="634.1" width="14" height="4" rx="2" fill="#8e8e8e"/>
<text x="546" y="640.0" font-size="12" fill="#ccccdc" letter-spacing="0.35" font-weight="bold">Total</text>
<text x="605" y="640.0" font-size="12" fill="#ccccdc" font-weight="bold">3</text>
<rect x="524" y="652.9" width="14" height="4" rx="2" fill="#73bf69"/>
<text x="546" y="658.8" font-size="12" fill="#ccccdc" letter-spacing="0.35">Run</text>
<text x="605" y="658.8" font-size="12" fill="#ccccdc">3</text>
<rect x="524" y="671.7" width="14" height="4" rx="2" fill="#fade2a"/>
<text x="546" y="677.6" font-size="12" fill="#ccccdc" letter-spacing="0.35">Init</text>
<text x="605" y="677.6" font-size="12" fill="#ccccdc">0</text>
<rect x="524" y="690.5" width="14" height="4" rx="2" fill="#ff7383"/>
<text x="546" y="696.4" font-size="12" fill="#ccccdc" letter-spacing="0.35">Stop</text>
<text x="605" y="696.4" font-size="12" fill="#ccccdc">0</text>
<rect x="524" y="709.3" width="14" height="4" rx="2" fill="#e02f44"/>
<text x="546" y="715.2" font-size="12" fill="#ccccdc" letter-spacing="0.35">Dead</text>
<text x="605" y="715.2" font-size="12" fill="#ccccdc">0</text>
<rect x="524" y="728.1" width="14" height="4" rx="2" fill="#3274d9"/>
<text x="546" y="734.0" font-size="12" fill="#ccccdc" letter-spacing="0.35">Fenced</text>
<text x="605" y="734.0" font-size="12" fill="#ccccdc">0</text>
</svg>
</body></html>
